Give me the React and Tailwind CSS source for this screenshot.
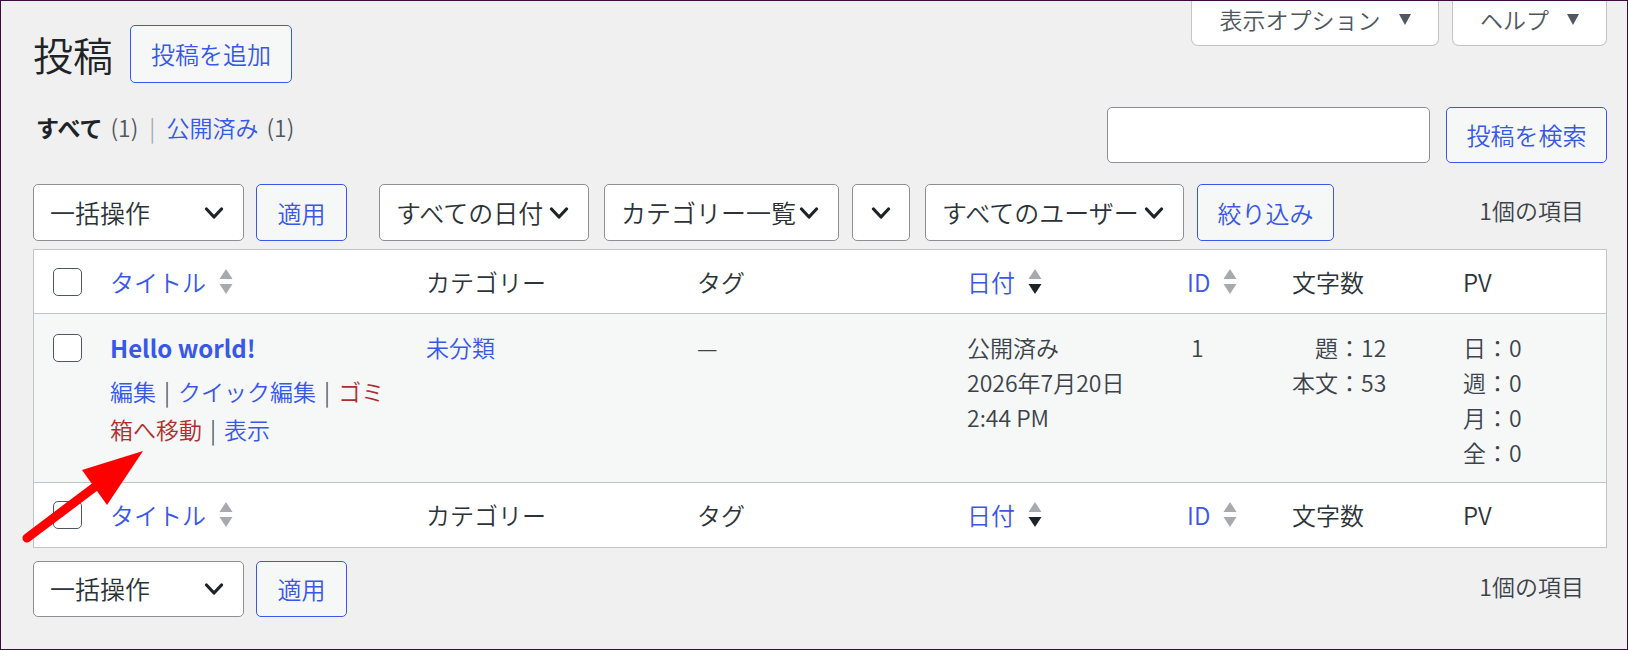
const columns = "grid grid-cols-[58px_316px_271px_270px_220px_105px_171px_161px]";

function Chevron() {
  return (
    <svg width="20" height="12" viewBox="0 0 20 12" fill="none" className="shrink-0">
      <polyline points="2.5,2 10,10 17.5,2" stroke="#1d2327" strokeWidth="3.2" strokeLinecap="round" strokeLinejoin="round" />
    </svg>
  );
}

function SortIcon({ active }) {
  return (
    <svg width="14" height="26" viewBox="0 0 14 26" className="ml-[13px] shrink-0">
      <path d="M7 0 L13.5 10 L0.5 10 Z" fill="#a7aaad" />
      <path d="M0.5 15 L13.5 15 L7 25 Z" fill={active ? "#1d2327" : "#a7aaad"} />
    </svg>
  );
}

function Triangle() {
  return (
    <svg width="12" height="11" viewBox="0 0 12 11" className="shrink-0">
      <path d="M0 0 L12 0 L6 11 Z" fill="#50575e" />
    </svg>
  );
}

function Select({ label, className }) {
  return (
    <div
      className={`flex items-center justify-between rounded-[5px] border border-[#8c8f94] bg-white pl-[16px] pr-[19px] text-[25px] text-[#2c3338] ${className}`}
    >
      <span className="whitespace-nowrap">{label}</span>
      <Chevron />
    </div>
  );
}

function Button({ children, className }) {
  return (
    <div
      className={`flex items-center justify-center rounded-[5px] border border-[#3858e9] bg-[#f6f7f7] text-[24px] text-[#3858e9] ${className}`}
    >
      {children}
    </div>
  );
}

function Checkbox() {
  return <div className="h-[28px] w-[29px] rounded-[5px] border border-[#50575e] bg-white" />;
}

function HeaderRow({ className }) {
  return (
    <div className={`${columns} h-[64px] items-center bg-white text-[24px] text-[#2c3338] ${className}`}>
      <div className="pl-[19px]">
        <Checkbox />
      </div>
      <div className="flex items-center pl-[18px] text-[#3858e9]">
        タイトル
        <SortIcon />
      </div>
      <div className="pl-[18px]">カテゴリー</div>
      <div className="pl-[18px]">タグ</div>
      <div className="flex items-center pl-[18px] text-[#3858e9]">
        日付
        <SortIcon active />
      </div>
      <div className="flex items-center pl-[18px] text-[#3858e9]">
        ID
        <SortIcon />
      </div>
      <div className="pl-[18px]">文字数</div>
      <div className="pl-[18px]">PV</div>
    </div>
  );
}

function Sep() {
  return <span className="mx-[8px] text-[#50575e]">|</span>;
}

export default function App() {
  return (
    <div className="relative h-[650px] w-full overflow-hidden border border-[#3c0b3f] bg-[#f0f0f1] pl-[32px] pr-[20px] font-['Noto_Sans_CJK_JP',sans-serif] font-[350]">
      <div className="flex justify-between">
        <div className="pt-[24px]">
          <div className="flex h-[58px] items-center">
            <h1 className="mr-[17px] text-[40px] leading-none text-[#1d2327]">投稿</h1>
            <Button className="h-[58px] w-[162px]">投稿を追加</Button>
          </div>
          <div className="mt-[29px] flex h-[30px] items-center pl-[3px] text-[23px] whitespace-nowrap">
            <span className="font-bold text-[#1d2327]">すべて</span>
            <span className="ml-[8px] text-[#50575e]">(1)</span>
            <span className="mx-[11px] text-[#a7aaad]">|</span>
            <span className="text-[#3858e9]">公開済み</span>
            <span className="ml-[8px] text-[#50575e]">(1)</span>
          </div>
        </div>
        <div className="flex flex-col items-end">
          <div className="flex gap-[13px] text-[23px] leading-[30px] text-[#50575e]">
            <div className="flex h-[45px] w-[248px] items-start justify-center gap-[18px] rounded-b-[7px] border border-t-0 border-[#c3c4c7] bg-white pt-[3px]">
              <span>表示オプション</span>
              <span className="mt-[10px]">
                <Triangle />
              </span>
            </div>
            <div className="flex h-[45px] w-[155px] items-start justify-center gap-[18px] rounded-b-[7px] border border-t-0 border-[#c3c4c7] bg-white pt-[3px]">
              <span>ヘルプ</span>
              <span className="mt-[10px]">
                <Triangle />
              </span>
            </div>
          </div>
          <div className="mt-[61px] flex gap-[16px]">
            <div className="h-[56px] w-[323px] rounded-[5px] border border-[#8c8f94] bg-white" />
            <Button className="h-[56px] w-[161px]">投稿を検索</Button>
          </div>
        </div>
      </div>

      <div className="mt-[21px] flex h-[57px] items-stretch">
        <Select label="一括操作" className="w-[211px]" />
        <Button className="ml-[12px] w-[91px]">適用</Button>
        <Select label="すべての日付" className="ml-[32px] w-[210px]" />
        <Select label="カテゴリー一覧" className="ml-[15px] w-[235px]" />
        <div className="ml-[13px] flex w-[58px] items-center justify-center rounded-[5px] border border-[#8c8f94] bg-white">
          <Chevron />
        </div>
        <Select label="すべてのユーザー" className="ml-[15px] w-[259px]" />
        <Button className="ml-[13px] w-[137px]">絞り込み</Button>
        <div className="ml-auto mr-[23px] flex items-center pb-[5px] text-[23px] text-[#3c434a]">1個の項目</div>
      </div>

      <div className="mt-[8px] border border-[#c3c4c7]">
        <HeaderRow className="border-b border-[#c3c4c7]" />
        <div className={`${columns} h-[169px] border-b border-[#c3c4c7] bg-[#f6f7f7] pt-[16px] text-[23px] leading-[35px] text-[#3c434a]`}>
          <div className="pl-[19px] pt-[4px]">
            <Checkbox />
          </div>
          <div className="pl-[18px]">
            <div className="text-[24px] font-semibold text-[#3858e9]">Hello world!</div>
            <div className="mt-[7px] leading-[38px] whitespace-nowrap">
              <div>
                <span className="text-[#3858e9]">編集</span>
                <Sep />
                <span className="text-[#3858e9]">クイック編集</span>
                <Sep />
                <span className="text-[#b32d2e]">ゴミ</span>
              </div>
              <div>
                <span className="text-[#b32d2e]">箱へ移動</span>
                <Sep />
                <span className="text-[#3858e9]">表示</span>
              </div>
            </div>
          </div>
          <div className="pl-[18px] text-[#3858e9]">未分類</div>
          <div className="pl-[18px]">—</div>
          <div className="pl-[18px]">
            <div>公開済み</div>
            <div>2026年7月20日</div>
            <div>2:44 PM</div>
          </div>
          <div className="pl-[22px]">1</div>
          <div className="pl-[18px]">
            <div className="inline-block text-right">
              <div>題：12</div>
              <div>本文：53</div>
            </div>
          </div>
          <div className="pl-[18px]">
            <div>日：0</div>
            <div>週：0</div>
            <div>月：0</div>
            <div>全：0</div>
          </div>
        </div>
        <HeaderRow />
      </div>

      <div className="mt-[13px] flex h-[56px] items-stretch">
        <Select label="一括操作" className="w-[211px]" />
        <Button className="ml-[12px] w-[91px]">適用</Button>
        <div className="ml-auto mr-[23px] flex items-center pb-[5px] text-[23px] text-[#3c434a]">1個の項目</div>
      </div>

      <svg
        width="1628"
        height="650"
        viewBox="0 0 1628 650"
        className="pointer-events-none absolute -left-px -top-px"
      >
        <line x1="27" y1="538" x2="100" y2="483" stroke="#ff0000" strokeWidth="9" strokeLinecap="round" />
        <polygon points="143,451 82,470 107,505" fill="#ff0000" />
      </svg>
    </div>
  );
}
